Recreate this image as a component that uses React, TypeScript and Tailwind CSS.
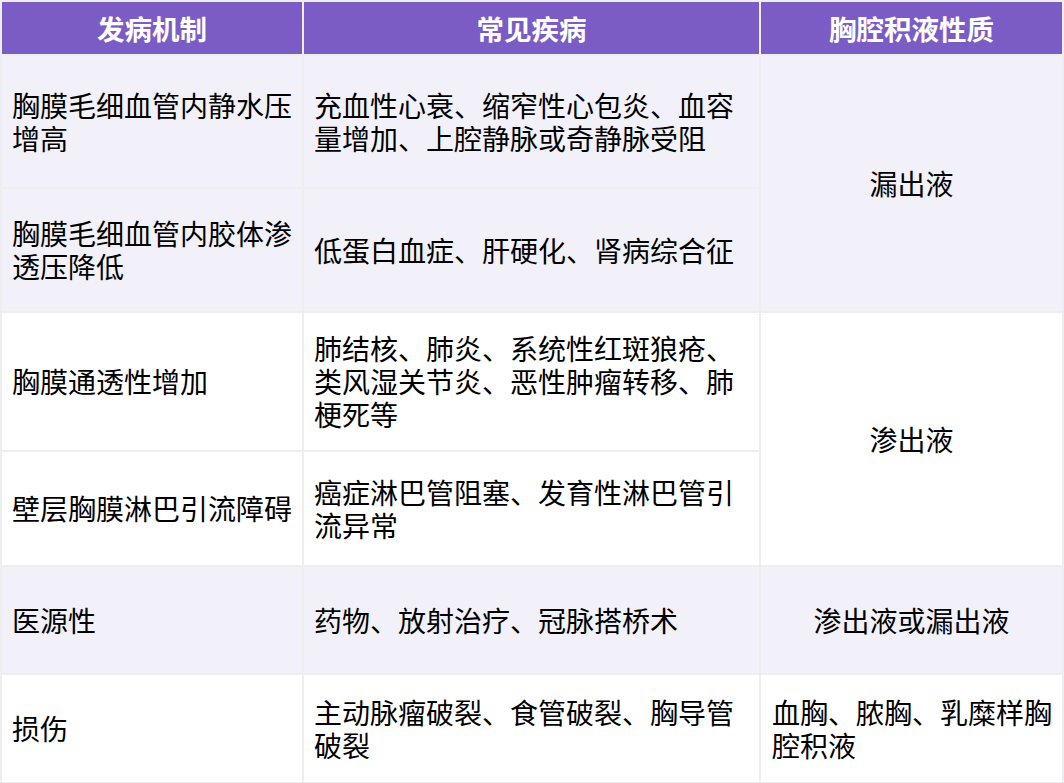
const rows = [
  { h: 'h-[131px]', a: '胸膜毛细血管内静水压增高', b: '充血性心衰、缩窄性心包炎、血容量增加、上腔静脉或奇静脉受阻', c: '漏出液', span: 2, bg: 'bg-[#f2f1fa]' },
  { h: 'h-[122px]', a: '胸膜毛细血管内胶体渗透压降低', b: '低蛋白血症、肝硬化、肾病综合征', bg: 'bg-[#f2f1fa]' },
  { h: 'h-[137px]', a: '胸膜通透性增加', b: '肺结核、肺炎、系统性红斑狼疮、类风湿关节炎、恶性肿瘤转移、肺梗死等', c: '渗出液', span: 2, bg: 'bg-white' },
  { h: 'h-[113px]', a: '壁层胸膜淋巴引流障碍', b: '癌症淋巴管阻塞、发育性淋巴管引流异常', bg: 'bg-white' },
  { h: 'h-[106px]', a: '医源性', b: '药物、放射治疗、冠脉搭桥术', c: '渗出液或漏出液', span: 1, bg: 'bg-[#f2f1fa]', center: true },
  { h: 'h-[107px]', a: '损伤', b: '主动脉瘤破裂、食管破裂、胸导管破裂', c: '血胸、脓胸、乳糜样胸腔积液', span: 1, bg: 'bg-white', center: false },
];

export default function App() {
  return (
    <div className="w-[1064px] h-[783px] bg-white" style={{ fontFamily: '"Noto Sans CJK SC", "Noto Sans", sans-serif' }}>
      <table className="w-[1064px] table-fixed border-separate border-spacing-[2px] bg-[#eeeef0] text-[28px] leading-[33px] text-black">
        <colgroup>
          <col className="w-[300px]" />
          <col className="w-[455px]" />
          <col className="w-[301px]" />
        </colgroup>
        <thead>
          <tr className="h-[52px] bg-[#7b5cc4] text-white text-[27.5px]">
            <th className="p-0 text-center font-bold">发病机制</th>
            <th className="p-0 text-center font-bold">常见疾病</th>
            <th className="p-0 text-center font-bold">胸腔积液性质</th>
          </tr>
        </thead>
        <tbody>
          {rows.map((r, i) => (
            <tr key={i} className={r.h}>
              <td className={`${r.bg} pl-[10px] pr-[4px] align-middle`}>{r.a}</td>
              <td className={`${r.bg} pl-[10px] pr-[8px] align-middle`}>{r.b}</td>
              {r.c && (
                <td
                  rowSpan={r.span}
                  className={`${r.bg} align-middle ${r.center === false ? 'pl-[11px] pr-[4px] text-left' : 'px-[4px] text-center'}`}
                >
                  {r.c}
                </td>
              )}
            </tr>
          ))}
        </tbody>
      </table>
    </div>
  );
}
